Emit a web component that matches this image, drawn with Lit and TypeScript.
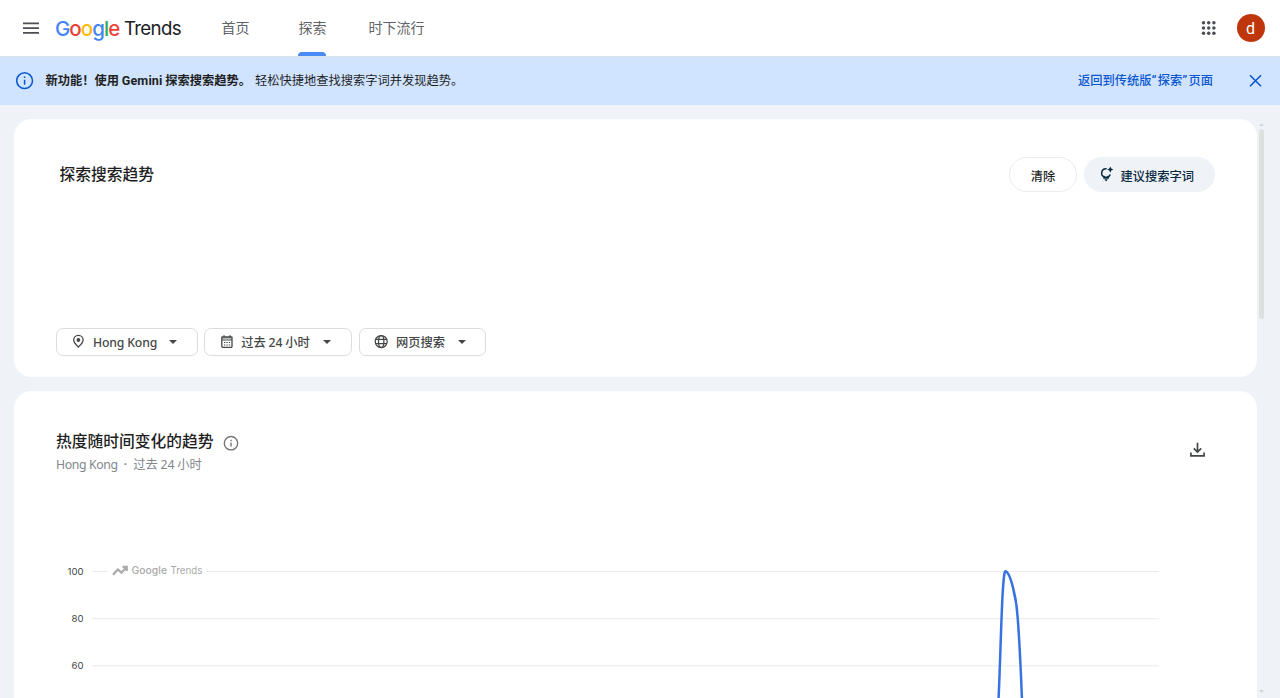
import { LitElement, html, css, svg } from "lit";
import { customElement } from "lit/decorators.js";

const WORDMARK = [
  ["G", "blue"],
  ["o", "red"],
  ["o", "yellow"],
  ["g", "blue"],
  ["l", "green"],
  ["e", "red"],
];

@customElement("trends-header")
class TrendsHeader extends LitElement {
  static styles = css`
    :host { display: flex; height: 56px; background: #fff; border-bottom: 1px solid #dfe3ea; box-sizing: content-box; color: #5f6368; }
    .menu { width: 18px; height: 18px; margin: 19px 0 0 22.4px; }
    .logo { margin: 14px 0 0 14.6px; width: 126px; display: flex; line-height: 29px; white-space: nowrap; font-family: Inter, sans-serif; }
    .google { width: 69px; font-size: 20.5px; letter-spacing: -0.95px; font-weight: 500; }
    .trends { font-size: 18.7px; letter-spacing: -0.65px; color: #202124; }
    .blue { color: #4285f4; }
    .red { color: #ea4335; }
    .yellow { color: #fbbc04; }
    .green { color: #34a853; }
    nav { display: flex; gap: 49px; margin-left: 40.5px; font-size: 14px; }
    .tab { display: flex; flex-direction: column; justify-content: space-between; line-height: 54px; height: 56px; }
    .tab.last { margin-left: -7px; }
    .bar { height: 4px; margin-top: -4px; background: #4a8af4; border-radius: 4px 4px 0 0; }
    .right { margin-left: auto; display: flex; align-items: flex-start; }
    .grid { width: 16px; height: 16px; margin: 20px 20px 0 0; }
    .avatar { width: 28px; height: 28px; margin: 14px 15.5px 0 0; border-radius: 50%; background: #bf360c; color: #fff; font: 16px/29px Roboto, sans-serif; text-align: center; }
  `;
  render() {
    return html`
      <svg class="menu" viewBox="0 0 18 18"><path d="M1 4.4h16M1 9.1h16M1 13.8h16" stroke="#4b4e52" stroke-width="1.7" /></svg>
      <div class="logo">
        <div class="google">${WORDMARK.map(([c, k]) => html`<span class=${k}>${c}</span>`)}</div>
        <div class="trends">Trends</div>
      </div>
      <nav>
        <div class="tab">首页</div>
        <div class="tab">探索<div class="bar"></div></div>
        <div class="tab last">时下流行</div>
      </nav>
      <div class="right">
        <svg class="grid" viewBox="0 0 16 16" fill="#4b4e52">
          ${[2.8, 8, 13.2].map((y) => [2.5, 7.7, 12.9].map((x) => svg`<circle cx=${x} cy=${y} r="1.75" />`))}
        </svg>
        <div class="avatar">d</div>
      </div>
    `;
  }
}

@customElement("trends-banner")
class TrendsBanner extends LitElement {
  static styles = css`
    :host { display: flex; align-items: center; height: 48px; background: #d0e4ff; font-size: 12.25px; white-space: nowrap; color: #1f1f1f; }
    .info { width: 18px; height: 18px; margin: 0 12px 0 15.5px; }
    .text { line-height: 46px; height: 48px; }
    .strong { font-weight: 700; width: 209.5px; }
    .latin { font-family: Roboto, sans-serif; font-size: 12.6px; }
    .name { letter-spacing: 0.1px; }
    .quote { font-size: 13px; letter-spacing: 1.3px; }
    .link { margin-left: auto; color: #0b57d0; font-weight: 500; width: 136px; }
    .close { width: 14px; height: 14px; margin: 0 17.5px 0 34.5px; }
  `;
  render() {
    return html`
      <svg class="info" viewBox="0 0 18 18" fill="none" stroke="#0b57d0">
        <circle cx="8.6" cy="8.7" r="7.9" stroke-width="1.5" />
        <path d="M8.6 7.7v5M8.6 4.6v1.5" stroke-width="1.5" />
      </svg>
      <div class="text strong">新功能！使用 <span class="latin name">Gemini</span> 探索搜索趋势。</div>
      <div class="text">轻松快捷地查找搜索字词并发现趋势。</div>
      <div class="text link">返回到传统版<span class="latin quote">“</span>探索<span class="latin quote">”</span>页面</div>
      <svg class="close" viewBox="0 0 14 14"><path d="M1 1.2l11 11M12 1.2l-11 11" stroke="#0b57d0" stroke-width="1.6" /></svg>
    `;
  }
}

const caret = html`<svg class="caret" viewBox="0 0 8 4"><path d="M0 0h8L4 4z" fill="#444746" /></svg>`;

@customElement("trends-explore")
class TrendsExplore extends LitElement {
  static styles = css`
    :host { display: flex; flex: none; flex-direction: column; justify-content: space-between; height: 258px; box-sizing: border-box; background: #fff; border-radius: 17.5px; padding: 38px 42px 21px 42px; }
    .row { display: flex; }
    .title { font-size: 15.75px; line-height: 24px; font-weight: 500; color: #1f1f1f; margin: 5px auto 0 3.5px; }
    .pill { display: flex; align-items: center; box-sizing: border-box; height: 35px; border-radius: 18px; font-size: 12.25px; font-weight: 500; line-height: 36px; padding-top: 2px; }
    .clear { width: 68px; justify-content: center; border: 1px solid #e9ebee; color: #1f1f1f; margin-right: 7px; }
    .suggest { width: 131px; background: #eff3f8; color: #0a2a43; }
    .bulb { width: 15px; height: 16px; margin: -3px 6.5px 0 15px; }
    .chips { display: flex; gap: 7px; }
    .chip { display: flex; align-items: center; box-sizing: border-box; height: 28px; border: 1px solid #dadce0; border-radius: 7px; font-size: 12.25px; font-weight: 500; color: #444746; white-space: nowrap; padding: 0 19.5px 0 13.5px; }
    .place { width: 141.5px; }
    .time { width: 147.5px; margin-left: -0.3px; margin-right: 0.3px; }
    .kind { width: 127px; }
    .icon { width: 16px; height: 16px; flex: none; margin-right: 6.5px; }
    .latin { font-family: "Noto Sans", sans-serif; letter-spacing: -0.17px; }
    .digits { font-family: "Noto Sans", sans-serif; }
    .caret { width: 8px; height: 4px; margin-left: auto; }
  `;
  render() {
    return html`
      <div class="row">
        <div class="title">探索搜索趋势</div>
        <div class="pill clear">清除</div>
        <div class="pill suggest">
          <svg class="bulb" viewBox="0 0 15 16" fill="none" stroke="#0a2a43">
            <path d="M7.6 2.7A4.4 4.4 0 1 0 11.2 8.6" stroke-width="1.5" />
            <path d="M5 9.8l.3 1.4h3.6l.3-1.4" stroke-width="1.1" />
            <path d="M4.2 12h5.8" stroke-width="1.4" />
            <path d="M5.4 13.2h3.4L7.1 15.4z" fill="#0a2a43" stroke="none" />
            <path d="M11.3 .5l1 2.1 2.1 1-2.1 1-1 2.1-1-2.1-2.1-1 2.1-1z" fill="#0a2a43" stroke="none" />
          </svg>
          <span>建议搜索字词</span>
        </div>
      </div>
      <div class="chips">
        <div class="chip place">
          <svg class="icon" viewBox="0 0 16 16" fill="none" stroke="#444746" stroke-width="1.3">
            <path d="M7.4 13.1C4.4 10.4 2.7 8.2 2.7 6.1a4.7 4.7 0 0 1 9.4 0c0 2.1-1.7 4.3-4.7 7z" />
            <circle cx="7.4" cy="6" r="1.9" fill="#444746" stroke="none" />
          </svg>
          <span class="latin">Hong Kong</span>${caret}
        </div>
        <div class="chip time">
          <svg class="icon" viewBox="0 0 16 16" fill="none" stroke="#444746">
            <rect x="2.8" y="2.9" width="10.2" height="10.4" rx=".7" stroke-width="1.3" />
            <path d="M2.8 3.9h10.2M2.8 6h10.2" stroke-width="1" />
            <path d="M5 1.3v2M11 1.3v2" stroke-width="1.3" />
            <path d="M5 8.5h1.3m1.1 0h1.3m1.1 0h1.3M5 11h1.3m1.1 0h1.3m1.1 0h1.3" stroke-width="1.1" />
          </svg>
          <span>过去 <span class="digits">24</span> 小时</span>${caret}
        </div>
        <div class="chip kind">
          <svg class="icon" viewBox="0 0 16 16" fill="none" stroke="#444746" stroke-width="1.25">
            <circle cx="7.2" cy="7.5" r="6" />
            <ellipse cx="7.2" cy="7.5" rx="2.7" ry="6" />
            <path d="M1.6 5.4h11.2M1.6 9.6h11.2" />
          </svg>
          <span>网页搜索</span>${caret}
        </div>
      </div>
    `;
  }
}

const TICKS = [100, 80, 60];

@customElement("trends-timeline")
class TrendsTimeline extends LitElement {
  static styles = css`
    :host { display: block; flex: none; height: 420px; background: #fff; border-radius: 17.5px; box-sizing: border-box; padding: 38px 42px; }
    .head { display: flex; }
    .title { display: flex; font-size: 15.75px; line-height: 24px; font-weight: 500; color: #1f1f1f; }
    .info { width: 16px; height: 16px; margin: 6px 0 0 9px; }
    .sub { display: flex; font-size: 12.25px; line-height: 20px; margin-top: 1px; color: #80868b; }
    .latin { font-family: "Noto Sans", sans-serif; }
    .place { letter-spacing: -0.36px; line-height: 22px; height: 20px; }
    .dot { width: 15.5px; text-align: center; font: 700 12px/22px Roboto, sans-serif; height: 20px; }
    .get { width: 18px; height: 18px; margin: 12px 8.5px 0 auto; }
    .chart { display: grid; grid-template-columns: 27.5px 1067px; column-gap: 8px; margin-top: 73px; }
    .ticks { display: flex; flex-direction: column; text-align: right; font: 9.6px/47.15px Inter, sans-serif; color: #444746; }
    .plot { display: block; width: 1067px; height: 190px; overflow: visible; }
    .mark { font-family: Inter, sans-serif; font-size: 10.6px; fill: #aaa; }
    .bold { font-weight: 500; }
  `;
  render() {
    return html`
      <div class="head">
        <div>
          <div class="title">
            热度随时间变化的趋势
            <svg class="info" viewBox="0 0 16 16" fill="none" stroke="#747775">
              <circle cx="8" cy="8.2" r="6.7" stroke-width="1.4" />
              <path d="M8 7.4v4.2M8 4.8v1.4" stroke-width="1.4" />
            </svg>
          </div>
          <div class="sub">
            <span class="latin place">Hong Kong</span>
            <span class="dot">·</span>
            <span>过去 <span class="latin">24</span> 小时</span>
          </div>
        </div>
        <svg class="get" viewBox="0 0 18 18" fill="none" stroke="#444746" stroke-width="1.7">
          <path d="M8.5 1.7v9M4.8 7.3l3.7 3.7 3.7-3.7M1.9 11.5v3.4h13.2v-3.4" />
        </svg>
      </div>
      <div class="chart">
        <div class="ticks">${TICKS.map((t) => html`<div>${t}</div>`)}</div>
        <svg class="plot" viewBox="0 0 1067 190">
          ${TICKS.map((_, i) => svg`<path d=${`M0 ${23.5 + i * 47.15}H1067`} stroke="#e8eaed" />`)}
          <rect x="16" y="14" width="99" height="18" fill="#fff" />
          <path d="M21 26.7l4.8-5.2 3.7 3.2 4.6-5.2M30.5 18.9h4.2v4.2" fill="none" stroke="#aaa" stroke-width="2.3" />
          <text class="mark bold" x="39.5" y="26" textLength="35.5" lengthAdjust="spacingAndGlyphs">Google</text>
          <text class="mark" x="78.5" y="26" textLength="32" lengthAdjust="spacingAndGlyphs">Trends</text>
          <path d="M906.5 152C908.7 108 910 22 913.5 23.3C918.5 24 924.8 52 925.7 70C927.3 91 928.8 120 930.3 160" fill="none" stroke="#3872e0" stroke-width="2.5" />
        </svg>
      </div>
    `;
  }
}

@customElement("app-root")
class AppRoot extends LitElement {
  static styles = css`
    :host { display: flex; flex-direction: column; height: 698px; width: 1280px; overflow: hidden; background: #eff3f8; font-family: "Noto Sans CJK SC", sans-serif; }
    main { display: flex; flex: 1; min-height: 0; padding: 14px 0 0 14px; }
    .cards { width: 1243px; display: flex; flex-direction: column; gap: 14px; }
    .scroll { display: flex; flex-direction: column; align-items: center; width: 9px; padding: 4px 0 5px; box-sizing: border-box; }
    .thumb { width: 5px; height: 190px; border-radius: 3px; background: #e0e0e0; margin-top: 3px; }
    .arrow { width: 5px; height: 3px; fill: #d5d5d5; }
    .down { margin-top: auto; }
  `;
  render() {
    return html`
      <trends-header></trends-header>
      <trends-banner></trends-banner>
      <main>
        <div class="cards">
          <trends-explore></trends-explore>
          <trends-timeline></trends-timeline>
        </div>
        <div class="scroll">
          <svg class="arrow" viewBox="0 0 5 3"><path d="M0 3L2.5 0 5 3z" /></svg>
          <div class="thumb"></div>
          <svg class="arrow down" viewBox="0 0 5 3"><path d="M0 0L2.5 3 5 0z" /></svg>
        </div>
      </main>
    `;
  }
}
